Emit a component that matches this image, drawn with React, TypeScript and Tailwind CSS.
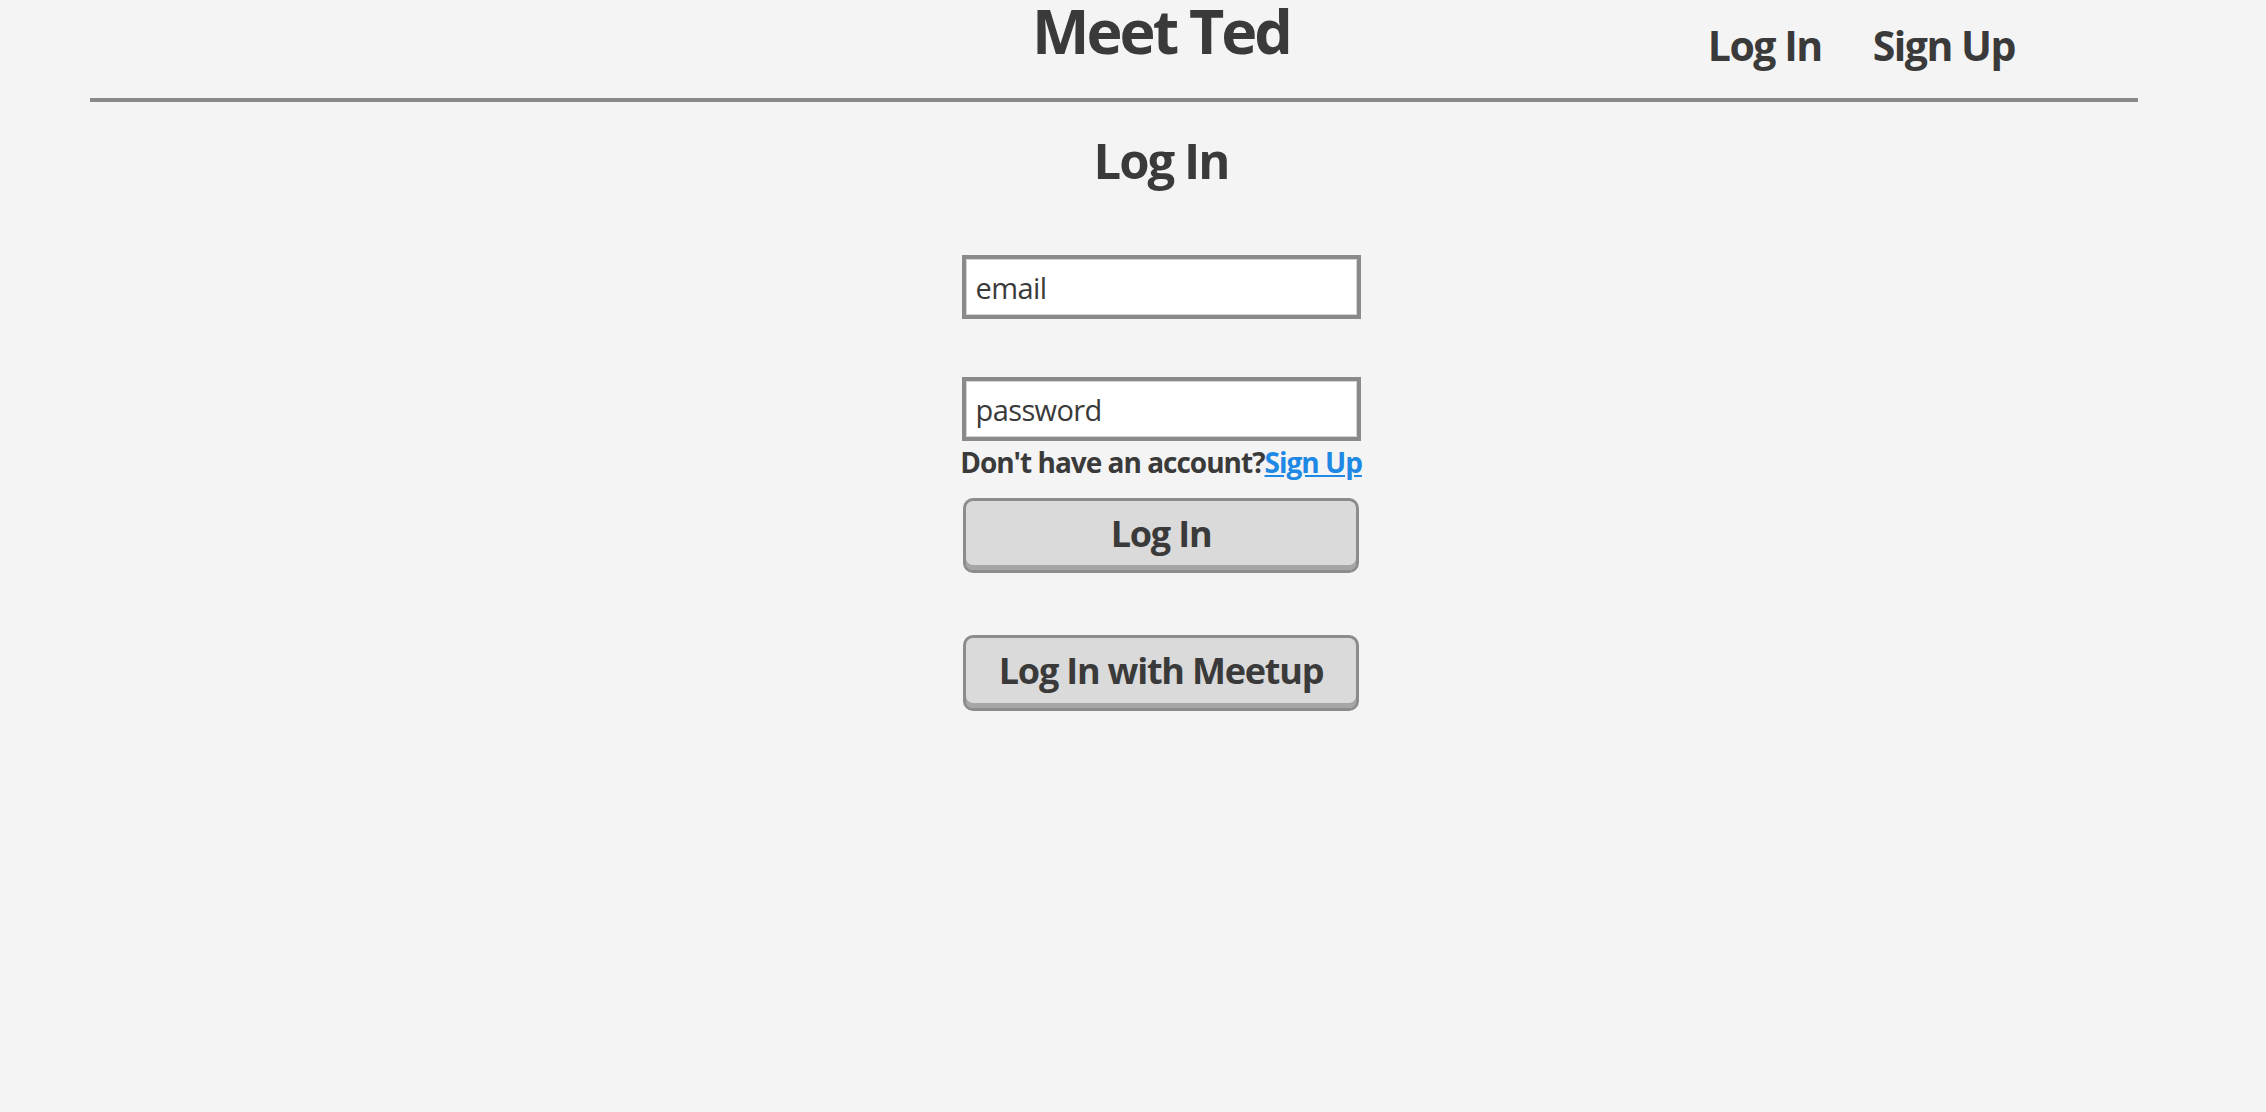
import React from "react";

export default function App() {
	const handleSubmit = (event: React.FormEvent<HTMLFormElement>) => {
		event.preventDefault();
	};

	return (
		<div
			className="min-h-[1112px] w-full bg-[#f4f4f4] text-[#3a3a3a]"
			style={{ fontFamily: '"Open Sans", "Noto Sans", sans-serif' }}
		>
			<header className="grid h-[98px] grid-cols-[1fr_auto_1fr] pl-[56px]">
				<div />
				<h1 className="text-[61px] font-bold leading-[62px] tracking-[-3px]">Meet Ted</h1>
				<nav className="flex justify-end gap-[51px] pr-[251px] pt-[25px] text-[41px] font-bold leading-[41px] tracking-[-1.5px]">
					<a href="#" className="cursor-pointer">
						Log In
					</a>
					<a href="#" className="cursor-pointer">
						Sign Up
					</a>
				</nav>
			</header>
			<div className="ml-[90px] h-[4px] w-[2048px] bg-[#8a8a8a]" />

			<main className="flex flex-col items-center pl-[56px]">
				<h2 className="mt-[34px] text-[49px] font-bold leading-[49px] tracking-[-2px]">Log In</h2>

				<form onSubmit={handleSubmit} className="mt-[70px] flex w-[399px] flex-col items-center">
					<input
						type="email"
						name="email"
						placeholder="email"
						className="h-[64px] w-full border-4 border-[#8a8a8a] bg-white pl-[10px] text-[29px] font-medium tracking-[-0.6px] shadow-[inset_0_0_0_1px_#d4d4d4] outline-none placeholder:text-[#3a3a3a]"
					/>
					<input
						type="password"
						name="password"
						placeholder="password"
						className="mt-[58px] h-[64px] w-full border-4 border-[#8a8a8a] bg-white pl-[10px] text-[29px] font-medium tracking-[-0.6px] shadow-[inset_0_0_0_1px_#d4d4d4] outline-none placeholder:text-[#3a3a3a]"
					/>
					<p className="mt-[7px] whitespace-nowrap text-[28px] font-bold leading-[28px] tracking-[-1px]">
						Don't have an account?
						<a href="#" className="text-[#1e88e5] underline">
							Sign Up
						</a>
					</p>
					<button
						type="submit"
						className="mt-[22px] h-[75px] w-[396px] rounded-[10px] border-[3px] border-[#8c8c8c] bg-[#dadada] pb-[4px] text-[36px] font-bold tracking-[-1.2px] shadow-[inset_0_-5px_0_#a6a6a6]"
					>
						Log In
					</button>
					<button
						type="button"
						className="mt-[62px] h-[76px] w-[396px] rounded-[10px] border-[3px] border-[#8c8c8c] bg-[#dadada] pb-[4px] text-[36px] font-bold tracking-[-1.2px] shadow-[inset_0_-5px_0_#a6a6a6]"
					>
						Log In with Meetup
					</button>
				</form>
			</main>
		</div>
	);
}
